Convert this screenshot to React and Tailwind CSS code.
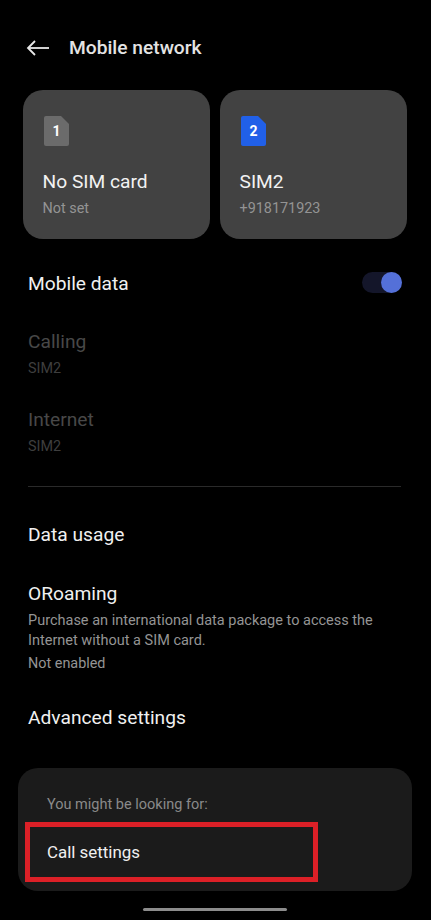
const SimIcon = ({ num, color }) => (
  <div className="relative w-[25px] h-[30px]">
    <svg width="25" height="30" viewBox="0 0 25 30">
      <path d="M2 0H17L25 8V28a2 2 0 0 1-2 2H2a2 2 0 0 1-2-2V2a2 2 0 0 1 2-2Z" fill={color} />
    </svg>
    <span className="absolute inset-0 flex items-center justify-center text-[14px] font-bold text-white leading-none">{num}</span>
  </div>
);

const SimCard = ({ num, color, title, sub }) => (
  <div className="flex-1 h-[149px] rounded-[20px] bg-[#424242] pl-[19.5px] pt-[26px]">
    <div className="pl-[1.5px]">
      <SimIcon num={num} color={color} />
    </div>
    <div className="mt-[23px] text-[19.2px] leading-[26px] text-[#f2f2f2]">{title}</div>
    <div className="mt-[4px] text-[14.4px] leading-[20px] text-[#949494]">{sub}</div>
  </div>
);

export default function App() {
  return (
    <div className="w-[431px] h-[920px] bg-black overflow-hidden flex flex-col font-['Roboto',sans-serif]">
      <div className="flex items-center h-[28px] mt-[34px] pl-[26px]">
        <svg width="23" height="16" viewBox="0 0 23 16" fill="none" stroke="#e8e8e8" strokeWidth="1.8">
          <path d="M23 8H2" />
          <path d="M9 1 2 8l7 7" />
        </svg>
        <span className="ml-[20px] text-[19.2px] font-medium text-[#e4e4e4]">Mobile network</span>
      </div>

      <div className="flex gap-[10px] ml-[23px] mr-[24px] mt-[28px]">
        <SimCard num="1" color="#6b6b6b" title="No SIM card" sub="Not set" />
        <SimCard num="2" color="#2160e8" title="SIM2" sub="+918171923" />
      </div>

      <div className="flex items-center justify-between mt-[31px] h-[28px] pl-[28px] pr-[29px]">
        <span className="text-[19.2px] text-[#f0f0f0]">Mobile data</span>
        <div className="relative w-[40px] h-[21px] mb-[3px] rounded-full bg-[#14162a]">
          <div className="absolute right-0 top-0 w-[21px] h-[21px] rounded-full bg-[#5470d8]" />
        </div>
      </div>

      <div className="mt-[30px] pl-[28px]">
        <div className="text-[19.2px] leading-[28px] text-[#484848]">Calling</div>
        <div className="mt-[3px] text-[14.4px] leading-[20px] text-[#3e3e3e]">SIM2</div>
      </div>
      <div className="mt-[27px] pl-[28px]">
        <div className="text-[19.2px] leading-[28px] text-[#484848]">Internet</div>
        <div className="mt-[3px] text-[14.4px] leading-[20px] text-[#3e3e3e]">SIM2</div>
      </div>

      <div className="ml-[28px] mr-[30px] mt-[29px] h-px bg-[#2a2a2a]" />

      <div className="mt-[34px] pl-[28px] text-[19.2px] leading-[28px] text-[#f0f0f0]">Data usage</div>

      <div className="mt-[31px] pl-[28px] pr-[40px]">
        <div className="text-[19.2px] leading-[28px] text-[#f0f0f0]">ORoaming</div>
        <div className="mt-[3px] text-[14.5px] leading-[20px] text-[#949494]">
          Purchase an international data package to access the Internet without a SIM card.
        </div>
        <div className="mt-[3px] text-[14.4px] leading-[20px] text-[#949494]">Not enabled</div>
      </div>

      <div className="mt-[30px] pl-[28px] text-[19.2px] leading-[28px] text-[#f0f0f0]">Advanced settings</div>

      <div className="ml-[18px] mr-[19px] mt-[36px] h-[123px] rounded-[20px] bg-[#1b1b1b] pl-[7px] pt-[27px]">
        <div className="pl-[22px] text-[14.5px] leading-[20px] text-[#8a8a8a]">You might be looking for:</div>
        <div className="mt-[7px] w-[293px] h-[60px] border-[5px] border-[#dc2027] flex items-center pl-[17px] text-[16.9px] text-[#f0f0f0]">
          <span className="pt-[1px]">Call settings</span>
        </div>
      </div>

      <div className="mt-[17px] ml-[143px] w-[144px] h-[3px] rounded-full bg-[#8c8c8c]" />
    </div>
  );
}
